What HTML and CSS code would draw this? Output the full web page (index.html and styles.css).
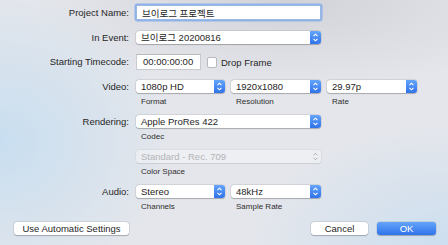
FILE: index.html
```html
<!DOCTYPE html>
<html>
<head>
<meta charset="utf-8">
<link rel="stylesheet" href="styles.css">
</head>
<body>
<div class="dialog">
  <div class="form">
    <div class="row r-name">
      <div class="label">Project Name:</div>
      <div class="field field-name focus">브이로그 프로젝트</div>
    </div>
    <div class="row r-event">
      <div class="label">In Event:</div>
      <div class="popup w-full"><span class="ptext">브이로그 20200816</span><span class="stepper"><svg width="11" height="13" viewBox="0 0 11 13"><path d="M3.5 5.2 L5.5 3.2 L7.5 5.2 M3.5 7.8 L5.5 9.8 L7.5 7.8" fill="none" stroke="#fff" stroke-width="1.1"/></svg></span></div>
    </div>
    <div class="row r-tc">
      <div class="label">Starting Timecode:</div>
      <div class="controls">
        <div class="field field-tc">00:00:00:00</div>
        <span class="checkbox"></span>
        <span class="cblabel">Drop Frame</span>
      </div>
    </div>
    <div class="row r-video">
      <div class="label">Video:</div>
      <div class="controls gap">
        <div class="col">
          <div class="popup w-a"><span class="ptext">1080p HD</span><span class="stepper"><svg width="11" height="13" viewBox="0 0 11 13"><path d="M3.5 5.2 L5.5 3.2 L7.5 5.2 M3.5 7.8 L5.5 9.8 L7.5 7.8" fill="none" stroke="#fff" stroke-width="1.1"/></svg></span></div>
          <div class="sub">Format</div>
        </div>
        <div class="col">
          <div class="popup w-b"><span class="ptext">1920x1080</span><span class="stepper"><svg width="11" height="13" viewBox="0 0 11 13"><path d="M3.5 5.2 L5.5 3.2 L7.5 5.2 M3.5 7.8 L5.5 9.8 L7.5 7.8" fill="none" stroke="#fff" stroke-width="1.1"/></svg></span></div>
          <div class="sub">Resolution</div>
        </div>
        <div class="col">
          <div class="popup w-b"><span class="ptext">29.97p</span><span class="stepper"><svg width="11" height="13" viewBox="0 0 11 13"><path d="M3.5 5.2 L5.5 3.2 L7.5 5.2 M3.5 7.8 L5.5 9.8 L7.5 7.8" fill="none" stroke="#fff" stroke-width="1.1"/></svg></span></div>
          <div class="sub">Rate</div>
        </div>
      </div>
    </div>
    <div class="row r-render">
      <div class="label">Rendering:</div>
      <div class="col">
        <div class="popup w-full"><span class="ptext">Apple ProRes 422</span><span class="stepper"><svg width="11" height="13" viewBox="0 0 11 13"><path d="M3.5 5.2 L5.5 3.2 L7.5 5.2 M3.5 7.8 L5.5 9.8 L7.5 7.8" fill="none" stroke="#fff" stroke-width="1.1"/></svg></span></div>
        <div class="sub">Codec</div>
      </div>
    </div>
    <div class="row r-cs">
      <div class="label"></div>
      <div class="col">
        <div class="popup w-full disabled"><span class="ptext">Standard - Rec. 709</span><span class="stepper plain"><svg width="11" height="13" viewBox="0 0 11 13"><path d="M3.5 5.2 L5.5 3.2 L7.5 5.2 M3.5 7.8 L5.5 9.8 L7.5 7.8" fill="none" stroke="#a9abaf" stroke-width="1"/></svg></span></div>
        <div class="sub">Color Space</div>
      </div>
    </div>
    <div class="row r-audio">
      <div class="label">Audio:</div>
      <div class="controls gap">
        <div class="col">
          <div class="popup w-a"><span class="ptext">Stereo</span><span class="stepper"><svg width="11" height="13" viewBox="0 0 11 13"><path d="M3.5 5.2 L5.5 3.2 L7.5 5.2 M3.5 7.8 L5.5 9.8 L7.5 7.8" fill="none" stroke="#fff" stroke-width="1.1"/></svg></span></div>
          <div class="sub">Channels</div>
        </div>
        <div class="col">
          <div class="popup w-b"><span class="ptext">48kHz</span><span class="stepper"><svg width="11" height="13" viewBox="0 0 11 13"><path d="M3.5 5.2 L5.5 3.2 L7.5 5.2 M3.5 7.8 L5.5 9.8 L7.5 7.8" fill="none" stroke="#fff" stroke-width="1.1"/></svg></span></div>
          <div class="sub">Sample Rate</div>
        </div>
      </div>
    </div>
  </div>
  <div class="buttons">
    <button class="btn btn-auto">Use Automatic Settings</button>
    <div class="right">
      <button class="btn btn-cancel">Cancel</button>
      <button class="btn btn-ok">OK</button>
    </div>
  </div>
</div>
</body>
</html>
```
FILE: styles.css
```css
* { box-sizing: border-box; }
html, body { margin: 0; padding: 0; }
body {
  width: 448px;
  height: 245px;
  overflow: hidden;
  font-family: "Liberation Sans", "Noto Sans CJK KR", sans-serif;
  font-size: 9.5px;
  color: #262626;
  background:
    radial-gradient(ellipse 170px 150px at 0% 58%, rgba(200,222,240,1), rgba(200,222,240,0)),
    radial-gradient(ellipse 200px 120px at 100% 100%, rgba(203,222,240,0.95), rgba(203,222,240,0)),
    radial-gradient(ellipse 260px 90px at 65% 0%, rgba(210,211,216,1), rgba(210,211,216,0)),
    #e4e6eb;
}
.dialog {
  display: flex;
  flex-direction: column;
  height: 245px;
}
.form {
  display: flex;
  flex-direction: column;
  padding-top: 5px;
}
.row {
  display: grid;
  grid-template-columns: 129px auto;
  column-gap: 7px;
  align-items: start;
}
.label {
  text-align: right;
  white-space: nowrap;
  line-height: 13px;
}
.r-name .label { line-height: 15px; }
.r-event { margin-top: 11px; }
.r-tc { margin-top: 10px; }
.r-tc .label { line-height: 16px; }
.r-video { margin-top: 10px; }
.r-render { margin-top: 8px; }
.r-cs { margin-top: 8px; }
.r-audio { margin-top: 8px; }

.controls { display: flex; align-items: center; }
.controls.gap { gap: 6px; }
.col { display: flex; flex-direction: column; }

.field {
  background: #fff;
  height: 15px;
  line-height: 15px;
  padding-left: 5px;
  border: 1px solid #c9cacc;
  border-top-color: #b9babc;
  white-space: nowrap;
}
.field-name { width: 185px; border-color: #9bb8e0; }
.field.focus { box-shadow: 0 0 0 1.5px #8fb2ea; border-radius: 1px; }
.field-tc { width: 65px; height: 16px; line-height: 14px; padding-left: 6px; }
.checkbox {
  width: 10px;
  height: 11px;
  margin-left: 6px;
  background: #fff;
  border: 1px solid #b8b9bc;
  border-radius: 2px;
}
.cblabel { margin-left: 4px; }

.popup {
  position: relative;
  height: 13px;
  line-height: 13px;
  background: #fff;
  border-radius: 3px;
  box-shadow: 0 0 0 0.5px rgba(0,0,0,0.12), 0 0.5px 1px rgba(0,0,0,0.22);
  display: flex;
  justify-content: space-between;
  white-space: nowrap;
}
.ptext { padding-left: 5px; }
.w-full { width: 185px; }
.w-a { width: 89px; }
.w-b { width: 90px; }
.stepper {
  width: 11px;
  height: 13px;
  border-radius: 0 3px 3px 0;
  background: linear-gradient(#64a4fa, #2f73ea);
  display: flex;
}
.stepper.plain { background: none; }
.popup.disabled {
  background: rgba(255,255,255,0.35);
  color: #b3b4b7;
  box-shadow: 0 0 0 0.5px rgba(0,0,0,0.06), 0 0.5px 1px rgba(0,0,0,0.08);
}
.sub {
  font-size: 8px;
  line-height: 10px;
  margin-top: 4px;
  padding-left: 5px;
  color: #2e2e2e;
}

.buttons {
  display: flex;
  justify-content: space-between;
  padding: 0 12px 0 14px;
  margin-top: 10px;
}
.right { display: flex; gap: 9px; }
.btn {
  font-family: "Liberation Sans", sans-serif;
  font-size: 9.5px;
  color: #262626;
  height: 13px;
  line-height: 13px;
  padding: 0;
  border: none;
  border-radius: 3px;
  background: #fff;
  box-shadow: 0 0 0 0.5px rgba(0,0,0,0.12), 0 0.5px 1px rgba(0,0,0,0.22);
}
.btn-auto { width: 115px; }
.btn-cancel { width: 57px; }
.btn-ok {
  width: 59px;
  color: #fff;
  background: linear-gradient(#64a4fa, #2f73ea);
}
```
